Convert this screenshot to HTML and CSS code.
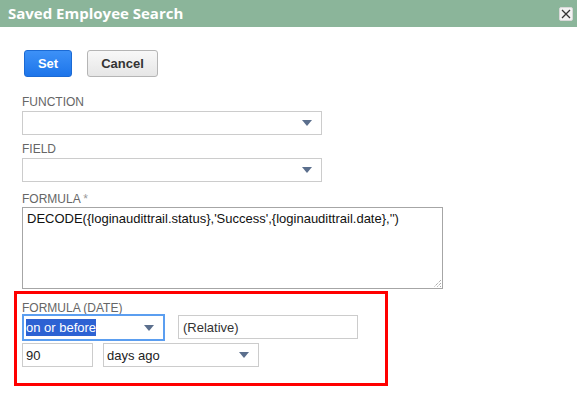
FILE: index.html
```html
<!DOCTYPE html>
<html>
<head>
<meta charset="utf-8">
<link rel="stylesheet" href="styles.css">
</head>
<body>
<div class="titlebar">
  <span class="title">Saved Employee Search</span>
  <span class="close"><svg width="10" height="10" viewBox="0 0 10 10"><path d="M1 1L9 9M9 1L1 9" stroke="#333" stroke-width="1.3"/></svg></span>
</div>
<div class="content">
  <div class="buttons">
    <button class="btn btn-primary">Set</button>
    <button class="btn btn-default">Cancel</button>
  </div>
  <div class="label l-function">FUNCTION</div>
  <div class="select w300"><span class="val"></span><span class="arrow"></span></div>
  <div class="label l-field">FIELD</div>
  <div class="select w300"><span class="val"></span><span class="arrow"></span></div>
  <div class="label l-formula">FORMULA <span class="req">*</span></div>
  <div class="textarea">DECODE({loginaudittrail.status},'Success',{loginaudittrail.date},'')<span class="grip"><svg width="8" height="8" viewBox="0 0 8 8"><path d="M8 1L1 8M8 4L4 8M8 7L7 8" stroke="#888" stroke-width="1" stroke-dasharray="1 1"/></svg></span></div>
  <div class="redbox">
    <div class="label l-date">FORMULA (DATE)</div>
    <div class="row row1">
      <div class="select focus w-op"><span class="val"><span class="hl">on or before</span></span><span class="arrow"></span></div>
      <div class="input w-rel">(Relative)</div>
    </div>
    <div class="row row2">
      <div class="input w-num">90</div>
      <div class="select w-unit"><span class="val">days ago</span><span class="arrow"></span></div>
    </div>
  </div>
</div>
</body>
</html>
```
FILE: styles.css
```css
html, body { margin: 0; padding: 0; background: #fff; }
body { font-family: "Liberation Sans", Arial, sans-serif; width: 577px; height: 393px; overflow: hidden; }

.titlebar {
  height: 27px;
  background: #8bb59a;
  display: flex;
  align-items: center;
  justify-content: space-between;
  padding: 0 4px 0 8px;
}
.title {
  font-family: "Open Sans", sans-serif;
  font-weight: 700;
  font-size: 15px;
  color: #fff;
  line-height: 27px;
}
.close {
  width: 12px; height: 12px;
  background: #f2f2f2;
  border: 1px solid #d8d8d8;
  border-radius: 2px;
  display: flex; align-items: center; justify-content: center;
}

.content { padding-left: 22px; }

.buttons { display: flex; gap: 15px; margin-top: 23px; padding-left: 2px; }
.btn {
  height: 27px;
  border-radius: 3px;
  font-family: "Liberation Sans", Arial, sans-serif;
  font-weight: 700;
  font-size: 13px;
  padding: 0;
  box-sizing: border-box;
}
.btn-primary {
  width: 48px;
  color: #fff;
  background: linear-gradient(#3d91f7, #1d75ea);
  border: 1px solid #1b6ad4;
}
.btn-default {
  width: 71px;
  color: #333;
  background: linear-gradient(#f8f8f8, #e6e6e6);
  border: 1px solid #b5b5b5;
}

.label {
  font-size: 12px;
  line-height: 14px;
  color: #666;
  text-transform: uppercase;
  margin-bottom: 2px;
}
.l-function { margin-top: 18px; }
.l-field { margin-top: 7px; }
.l-formula { margin-top: 10px; margin-bottom: 1px; }
.req { color: #999; }

.select, .input {
  box-sizing: border-box;
  height: 24px;
  border: 1px solid #cccccc;
  background: #fff;
  display: flex;
  align-items: center;
  font-size: 13px;
  color: #222;
  position: relative;
}
.select .val { flex: 1; padding-left: 3px; white-space: nowrap; }
.arrow {
  width: 0; height: 0;
  border-left: 5.5px solid transparent;
  border-right: 5.5px solid transparent;
  border-top: 6px solid #5b6f8d;
  margin-right: 9px;
}
.w300 { width: 300px; }

.textarea {
  box-sizing: border-box;
  width: 421px;
  height: 82px;
  border: 1px solid #a6a6a6;
  padding: 3px 4px;
  font-size: 13px;
  line-height: 16px;
  color: #111;
  position: relative;
}
.grip { position: absolute; right: 1px; bottom: 1px; width: 8px; height: 8px; display: flex; }

.redbox {
  margin-top: 2px;
  margin-left: -8px;
  width: 374px;
  height: 95px;
  box-sizing: border-box;
  border: 3px solid #ff0000;
  padding: 7px 0 0 5px;
}
.l-date { margin-bottom: 0; }
.row { display: flex; }
.row1 { gap: 13px; align-items: flex-start; }
.row2 { gap: 10px; margin-top: 2px; }
.select.focus {
  border: 2px solid #5b9ef0;
  height: 27px;
  margin-top: -1px;
}
.select.focus .val { padding-left: 2px; }
.hl { background: #2d62d3; color: #fff; padding: 1px 0; }
.w-op { width: 143px; }
.w-rel { width: 180px; padding-left: 4px; color: #333; }
.w-num { width: 71px; padding-left: 3px; }
.w-unit { width: 156px; }
.w-unit .val { padding-left: 3px; }
```
